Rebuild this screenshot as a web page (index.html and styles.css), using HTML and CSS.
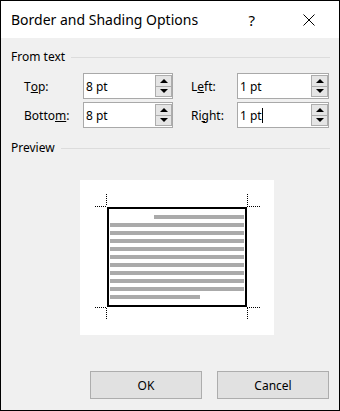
FILE: index.html
```html
<!DOCTYPE html>
<html lang="en">

<head>
    <meta charset="UTF-8">
    <meta name="viewport" content="width=device-width, initial-scale=1.0">
    <title>Border and Shading Options</title>
    <link rel="stylesheet" href="styles.css">
</head>

<body>
    <div class="dialog">
        <div class="titlebar">
            <span class="title">Border and Shading Options</span>
            <span class="help">?</span>
            <svg class="close" width="12" height="12" viewBox="0 0 12 12">
                <path d="M0.5 0.5 L11.5 11.5 M11.5 0.5 L0.5 11.5" stroke="#000" stroke-width="1" fill="none" />
            </svg>
        </div>

        <div class="content">
            <div class="group-head">
                <span>From text</span>
                <span class="rule"></span>
            </div>

            <div class="fields">
                <label for="top">T<u>o</u>p:</label>
                <div class="spin">
                    <span class="value" id="top">8 pt</span>
                    <div class="arrows">
                        <span class="arrow up"></span>
                        <span class="arrow down"></span>
                    </div>
                </div>
                <label for="left">L<u>e</u>ft:</label>
                <div class="spin">
                    <span class="value" id="left">1 pt</span>
                    <div class="arrows">
                        <span class="arrow up"></span>
                        <span class="arrow down"></span>
                    </div>
                </div>

                <label for="bottom">Botto<u>m</u>:</label>
                <div class="spin">
                    <span class="value" id="bottom">8 pt</span>
                    <div class="arrows">
                        <span class="arrow up"></span>
                        <span class="arrow down"></span>
                    </div>
                </div>
                <label for="right">Ri<u>g</u>ht:</label>
                <div class="spin">
                    <span class="value" id="right">1 pt<span class="caret"></span></span>
                    <div class="arrows">
                        <span class="arrow up"></span>
                        <span class="arrow down"></span>
                    </div>
                </div>
            </div>

            <div class="group-head preview-head">
                <span>Preview</span>
                <span class="rule"></span>
            </div>

            <div class="preview">
                <svg width="194" height="155" viewBox="0 0 194 155">
                    <g fill="#aaaaaa">
                        <rect x="74" y="35" width="90" height="4" />
                        <rect x="30" y="43" width="134" height="4" />
                        <rect x="30" y="51" width="134" height="4" />
                        <rect x="30" y="59" width="134" height="4" />
                        <rect x="30" y="67" width="134" height="4" />
                        <rect x="30" y="75" width="134" height="4" />
                        <rect x="30" y="83" width="134" height="4" />
                        <rect x="30" y="91" width="134" height="4" />
                        <rect x="30" y="99" width="134" height="4" />
                        <rect x="30" y="107" width="134" height="4" />
                        <rect x="30" y="115" width="90" height="4" />
                    </g>
                    <rect x="28" y="28" width="138" height="98" fill="none" stroke="#000" stroke-width="2" />
                    <g stroke="#000" stroke-width="1" stroke-dasharray="1 1" fill="none">
                        <path d="M26.5 14 V26 M15 26.5 H27" />
                        <path d="M167.5 14 V26 M167 26.5 H180" />
                        <path d="M15 127.5 H27 M26.5 128 V140" />
                        <path d="M167 127.5 H180 M167.5 128 V140" />
                    </g>
                </svg>
            </div>

            <div class="buttons">
                <button type="button">OK</button>
                <button type="button">Cancel</button>
            </div>
        </div>
    </div>
</body>

</html>
```

FILE: styles.css
```css
body {
    margin: 0;
    font-family: "Noto Sans", "Open Sans", sans-serif;
    font-size: 12px;
    color: #000;
}

.dialog {
    width: 340px;
    height: 411px;
    box-sizing: border-box;
    border: 1px solid #000;
    background-color: #f0f0f0;
    display: flex;
    flex-direction: column;
}

.titlebar {
    height: 37px;
    background-color: #fff;
    display: flex;
    align-items: center;
    padding-left: 10px;
}

.title {
    font-size: 14px;
    flex: 1;
}

.help {
    font-size: 15px;
    margin-right: 48px;
}

.close {
    margin-right: 24px;
}

.content {
    flex: 1;
    display: flex;
    flex-direction: column;
    padding: 12px 9px 0 10px;
}

.group-head {
    display: flex;
    align-items: center;
    height: 14px;
    line-height: 14px;
}

.group-head .rule {
    flex: 1;
    height: 1px;
    background-color: #dcdcdc;
    margin-left: 6px;
}

.fields {
    display: grid;
    grid-template-columns: 59px 90px 64px 92px;
    grid-template-rows: 26px 26px;
    row-gap: 3px;
    margin-top: 9px;
    padding-left: 13px;
}

.fields label {
    display: flex;
    align-items: center;
}

.fields label:nth-of-type(2),
.fields label:nth-of-type(4) {
    margin-left: 18px;
}

.spin {
    display: flex;
    align-items: stretch;
    background-color: #fff;
    border: 1px solid #a9a9a9;
}

.spin .value {
    flex: 1;
    display: flex;
    align-items: center;
    padding-left: 2px;
}

.caret {
    display: inline-block;
    width: 1px;
    height: 15px;
    background-color: #000;
}

.arrows {
    width: 17px;
    display: flex;
    flex-direction: column;
    padding: 1px 0;
}

.arrow {
    flex: 1;
    box-sizing: border-box;
    border: 1px solid #adadad;
    background-color: #e5e5e5;
    display: flex;
    align-items: center;
    justify-content: center;
}

.arrow.down {
    border-top: none;
}

.arrow::after {
    content: "";
    width: 0;
    height: 0;
    border-left: 4px solid transparent;
    border-right: 4px solid transparent;
}

.arrow.up::after {
    border-bottom: 4px solid #000;
}

.arrow.down::after {
    border-top: 4px solid #000;
}

.preview-head {
    margin-top: 13px;
}

.preview {
    width: 194px;
    height: 155px;
    background-color: #fff;
    margin-top: 25px;
    margin-left: 69px;
}

.preview svg {
    display: block;
}

.buttons {
    display: flex;
    justify-content: flex-end;
    gap: 15px;
    margin-top: 36px;
    padding-right: 1px;
}

.buttons button {
    width: 112px;
    height: 28px;
    font-family: inherit;
    font-size: 12px;
    color: #000;
    background-color: #e1e1e1;
    border: 1px solid #adadad;
    border-radius: 0;
    padding: 0;
}
```
